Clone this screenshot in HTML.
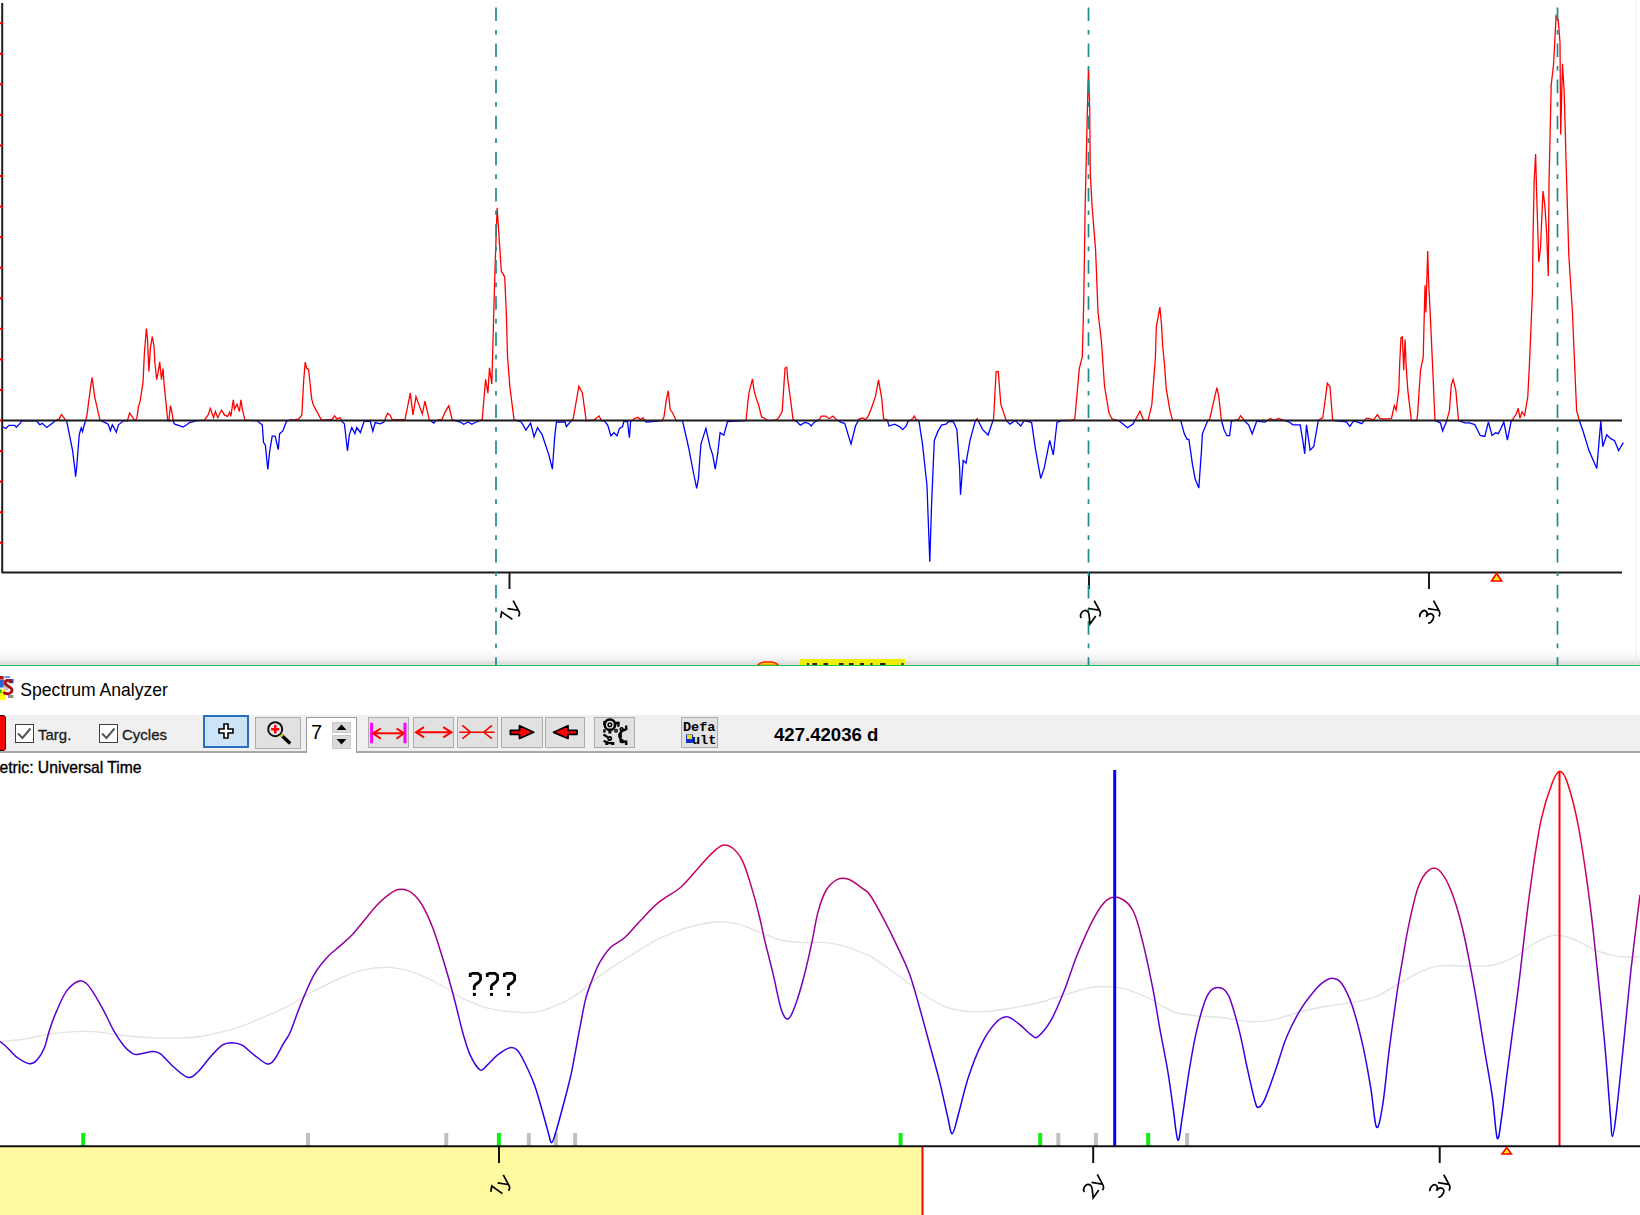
<!DOCTYPE html>
<html><head><meta charset="utf-8">
<style>
html,body{margin:0;padding:0;width:1640px;height:1215px;overflow:hidden;background:#fff;font-family:"Liberation Sans",sans-serif;}
.abs{position:absolute;}
svg{position:absolute;left:0;top:0;}
.tb{position:absolute;left:0;top:715px;width:1640px;height:36px;background:#f0f0f0;border-bottom:2px solid #a8a8a8;}
.btn{position:absolute;top:717px;height:29px;background:#e1e1e1;border:1px solid #adadad;box-sizing:border-box;height:31px;}
.lbl{position:absolute;font-size:15px;color:#000;white-space:nowrap;}
</style></head><body>
<svg width="1640" height="666" viewBox="0 0 1640 666">
  <defs>
    <linearGradient id="gshade" gradientUnits="userSpaceOnUse" x1="0" y1="649" x2="0" y2="665">
      <stop offset="0" stop-color="#ffffff"/>
      <stop offset="0.4" stop-color="#f9f9f9"/>
      <stop offset="0.68" stop-color="#f0f0f0"/>
      <stop offset="0.9" stop-color="#dcdcdc"/>
      <stop offset="0.97" stop-color="#e6dce6"/>
      <stop offset="1" stop-color="#e6dce6"/>
    </linearGradient>
    <clipPath id="cup"><rect x="0" y="0" width="1640" height="420.5"/></clipPath>
    <clipPath id="cdn"><rect x="0" y="420.5" width="1640" height="300"/></clipPath>
  </defs>
  <rect x="0" y="649" width="1640" height="16" fill="url(#gshade)"/>
  <!-- left axis -->
  <line x1="2.2" y1="3" x2="2.2" y2="573" stroke="#1e1e1e" stroke-width="2"/>
  <g stroke="#e80000" stroke-width="2">
    <line x1="0" y1="23.2" x2="3" y2="23.2"/>
<line x1="0" y1="53.8" x2="3" y2="53.8"/>
<line x1="0" y1="84.3" x2="3" y2="84.3"/>
<line x1="0" y1="114.9" x2="3" y2="114.9"/>
<line x1="0" y1="145.5" x2="3" y2="145.5"/>
<line x1="0" y1="176.0" x2="3" y2="176.0"/>
<line x1="0" y1="206.6" x2="3" y2="206.6"/>
<line x1="0" y1="237.1" x2="3" y2="237.1"/>
<line x1="0" y1="267.7" x2="3" y2="267.7"/>
<line x1="0" y1="298.3" x2="3" y2="298.3"/>
<line x1="0" y1="328.8" x2="3" y2="328.8"/>
<line x1="0" y1="359.4" x2="3" y2="359.4"/>
<line x1="0" y1="389.9" x2="3" y2="389.9"/>
<line x1="0" y1="420.5" x2="3" y2="420.5"/>
<line x1="0" y1="451.1" x2="3" y2="451.1"/>
<line x1="0" y1="481.6" x2="3" y2="481.6"/>
<line x1="0" y1="512.2" x2="3" y2="512.2"/>
<line x1="0" y1="542.7" x2="3" y2="542.7"/>
  </g>
  <!-- curve -->
  <polyline points="3.0,427.0 5.9,428.5 8.9,425.3 14.8,425.3 16.3,427.3 20.7,422.6 21.5,420.8 36.3,420.8 40.0,424.8 42.2,423.3 46.7,427.5 53.3,422.6 54.8,420.8 59.3,418.9 61.5,414.4 65.2,419.6 66.7,421.1 72.6,450.7 74.8,468.5 75.6,476.7 76.7,467.0 78.1,449.3 79.3,434.4 81.2,427.8 82.5,431.5 83.7,427.0 86.7,416.7 88.1,406.3 90.4,388.5 92.1,377.4 93.0,384.1 94.8,397.4 100.0,420.4 103.7,421.9 108.1,424.1 110.4,430.7 112.3,424.8 114.1,427.8 116.3,432.2 118.5,424.8 122.2,421.9 123.0,420.8 127.4,420.8 127.7,419.6 129.6,413.0 134.1,419.6 135.6,420.4 137.0,417.4 138.5,406.3 140.0,401.9 143.0,382.6 144.4,353.0 146.4,328.5 147.4,338.1 148.9,371.5 150.4,347.8 152.3,336.7 154.1,347.0 154.8,361.9 156.7,379.6 158.2,372.2 159.7,361.9 161.5,379.6 163.0,368.5 164.1,384.1 165.9,401.9 167.7,420.4 168.9,420.8 170.4,405.6 171.9,412.2 173.6,422.6 174.8,424.1 179.3,425.6 183.0,427.0 186.7,424.8 189.6,422.6 192.6,421.9 195.6,420.8 204.3,420.1 208.0,415.2 210.4,408.4 213.5,417.7 215.4,411.5 217.8,417.7 221.5,410.0 224.6,415.2 227.7,416.4 229.6,412.1 230.8,416.4 233.3,399.8 234.5,409.0 237.0,404.1 239.4,411.5 240.9,399.8 242.5,410.2 245.0,420.1 258.0,420.7 258.0,421.4 262.3,425.1 263.5,442.3 265.4,445.4 267.8,469.5 269.7,451.0 272.2,436.2 275.2,436.2 278.3,449.8 279.6,433.7 282.7,431.2 286.4,421.4 291.3,419.5 293.8,420.1 298.7,418.9 301.8,415.2 303.6,381.9 305.2,362.1 306.7,368.3 308.6,369.5 311.7,399.1 313.5,405.3 321.5,420.1 332.0,419.5 334.5,415.8 337.0,418.9 340.1,417.7 341.9,421.4 344.4,423.8 347.5,451.0 349.3,434.9 351.8,427.5 354.9,433.7 356.7,427.5 360.4,432.5 364.1,421.4 370.3,421.4 372.8,431.2 375.2,422.6 380.2,423.8 383.9,422.0 387.6,413.3 390.1,415.2 392.3,419.7 405.0,419.7 410.3,393.2 413.0,415.0 416.0,396.6 422.3,413.9 425.0,401.2 429.2,419.7 433.8,423.1 436.1,420.3 441.8,419.7 445.3,411.6 448.8,405.8 452.2,419.7 460.3,422.0 463.7,424.3 468.3,422.0 471.8,424.3 476.4,422.0 482.2,419.7 485.6,379.3 487.9,393.2 489.5,367.8 491.8,383.9 494.8,275.6 497.1,207.7 498.3,225.0 501.3,271.0 504.7,276.8 506.4,314.8 507.5,356.3 509.8,386.2 514.0,419.7 521.3,422.0 525.9,430.0 530.6,423.1 534.0,436.9 537.5,427.7 542.1,434.6 549.0,455.4 552.4,469.2 554.7,436.9 556.4,422.0 565.1,422.0 566.3,426.6 573.2,418.5 578.9,386.2 582.4,393.2 586.2,420.7 594.2,419.8 599.1,416.0 601.6,420.7 604.7,421.0 607.8,425.3 610.9,435.8 614.0,432.7 617.0,435.8 619.5,428.4 622.6,426.5 623.8,421.6 627.5,421.6 629.4,437.7 630.6,421.6 634.3,418.5 638.0,417.3 640.5,419.8 643.0,417.7 645.4,421.6 647.3,422.2 662.1,420.7 664.0,416.7 666.4,399.4 668.3,390.7 670.1,409.3 672.6,413.0 676.3,420.7 682.5,420.7 688.6,447.5 693.6,473.5 696.7,488.3 698.5,478.4 699.8,458.6 701.0,443.8 705.9,428.4 710.2,447.5 712.7,454.9 715.2,469.1 717.7,453.7 720.1,432.7 723.8,435.2 727.5,421.6 746.0,420.7 747.9,401.9 749.1,392.0 752.5,379.0 754.1,390.7 756.5,399.4 758.4,404.3 761.5,416.7 768.9,420.7 776.3,419.8 778.6,417.9 782.2,411.5 785.0,368.1 786.8,367.2 787.7,379.0 789.5,391.6 793.1,419.7 796.7,421.5 800.3,425.1 804.9,422.4 808.5,423.3 811.2,426.0 813.9,422.4 819.3,419.7 821.2,416.1 825.7,416.1 829.3,418.8 832.9,416.1 836.5,419.7 841.1,422.4 844.7,423.3 851.0,444.1 855.5,426.0 859.2,418.8 862.8,417.9 865.5,419.7 868.2,416.1 870.9,409.7 875.5,396.2 878.5,379.9 881.8,398.9 883.6,418.8 887.2,419.7 889.0,426.0 894.5,424.2 899.9,426.9 902.6,429.6 906.2,426.0 908.0,421.5 912.6,418.8 914.4,416.1 916.2,419.7 918.9,420.6 922.5,444.1 927.0,485.7 927.9,511.1 929.8,561.8 931.6,503.8 934.3,440.5 937.9,431.4 941.5,425.1 946.0,424.2 948.8,421.5 953.3,421.5 956.9,429.6 959.6,467.6 960.5,494.8 963.2,460.4 966.0,463.1 970.0,440.4 975.4,420.5 977.2,418.7 982.7,429.6 988.1,435.0 993.6,418.7 996.1,371.6 998.3,371.6 1000.8,404.2 1006.2,420.5 1009.9,424.1 1015.3,420.5 1020.7,425.9 1024.3,420.5 1031.6,422.3 1035.2,447.7 1040.7,478.5 1044.3,467.6 1049.7,440.4 1053.3,454.9 1057.0,422.3 1062.4,420.5 1070.0,420.5 1074.8,419.0 1079.3,368.6 1082.3,356.7 1083.7,303.0 1085.2,205.0 1087.3,113.4 1088.5,67.4 1089.7,110.0 1090.3,172.8 1092.0,205.0 1095.6,250.0 1098.0,312.0 1101.5,342.0 1104.5,386.0 1109.0,413.0 1112.0,419.0 1118.6,420.5 1127.6,427.8 1133.0,424.1 1140.0,411.2 1143.6,420.3 1148.1,420.3 1151.8,404.9 1155.4,357.8 1156.3,327.1 1159.9,307.1 1161.7,327.1 1162.6,345.2 1164.4,363.3 1166.2,388.6 1169.9,410.3 1172.6,420.3 1180.7,420.3 1184.3,433.8 1187.1,439.3 1188.9,439.3 1192.5,464.6 1195.2,479.1 1198.8,488.1 1201.5,450.1 1202.4,433.8 1207.9,420.3 1209.7,419.4 1213.3,403.1 1216.9,387.7 1218.7,395.8 1221.4,420.3 1224.2,430.2 1226.9,435.7 1229.6,435.7 1231.4,421.2 1238.6,419.4 1240.5,415.7 1245.0,421.2 1248.6,424.8 1252.2,433.8 1256.7,421.2 1264.9,422.1 1270.3,418.5 1273.9,420.3 1278.5,418.5 1289.3,422.1 1292.9,424.8 1300.2,424.8 1302.9,441.1 1304.7,453.8 1306.5,424.8 1310.1,450.1 1313.8,446.5 1318.3,420.3 1322.8,417.6 1325.5,397.6 1327.3,383.2 1330.0,386.8 1332.7,420.5 1346.3,421.9 1349.9,426.4 1353.5,421.0 1357.1,421.9 1361.7,423.7 1366.2,418.3 1368.9,418.3 1373.4,420.1 1377.4,414.7 1379.8,418.3 1384.3,419.2 1391.5,418.3 1394.3,405.6 1396.1,410.1 1398.8,390.2 1399.7,363.1 1401.0,337.7 1402.4,336.8 1403.7,370.3 1405.1,339.5 1406.0,363.1 1407.8,390.2 1411.4,420.5 1416.9,420.5 1417.8,411.9 1418.7,397.5 1420.5,370.3 1423.2,357.6 1424.1,321.4 1425.0,285.2 1425.9,312.4 1427.7,250.9 1428.6,281.6 1430.5,319.6 1432.3,359.5 1435.0,420.5 1440.4,422.8 1442.6,431.0 1446.7,421.0 1449.5,410.1 1451.3,384.8 1453.1,379.4 1455.8,390.2 1458.5,420.5 1464.8,422.8 1469.4,422.8 1474.8,424.6 1480.2,435.5 1484.8,436.4 1488.4,421.9 1492.0,435.5 1495.6,432.8 1498.3,433.7 1501.0,428.2 1503.8,421.9 1507.4,440.0 1511.0,421.9 1516.4,413.8 1518.2,408.3 1520.0,418.3 1521.9,411.9 1524.6,415.6 1527.8,396.5 1529.6,361.0 1532.4,293.8 1533.1,233.6 1534.2,180.5 1535.6,154.0 1537.0,205.0 1538.8,262.0 1540.5,247.8 1543.0,191.0 1544.8,205.0 1546.5,230.0 1548.3,276.0 1549.0,184.0 1551.2,85.0 1553.6,63.7 1556.1,16.0 1558.2,19.5 1560.0,42.5 1560.7,134.5 1562.5,63.7 1564.2,92.0 1566.0,159.3 1568.8,255.0 1572.4,311.5 1574.2,354.0 1576.6,410.6 1579.5,421.0 1583.0,431.0 1589.0,450.6 1596.8,468.4 1600.8,421.0 1602.8,446.6 1606.7,434.8 1610.7,438.7 1614.6,440.7 1618.6,450.6 1623.3,442.7" fill="none" stroke="#ff0000" stroke-width="1.3" clip-path="url(#cup)"/>
  <polyline points="3.0,427.0 5.9,428.5 8.9,425.3 14.8,425.3 16.3,427.3 20.7,422.6 21.5,420.8 36.3,420.8 40.0,424.8 42.2,423.3 46.7,427.5 53.3,422.6 54.8,420.8 59.3,418.9 61.5,414.4 65.2,419.6 66.7,421.1 72.6,450.7 74.8,468.5 75.6,476.7 76.7,467.0 78.1,449.3 79.3,434.4 81.2,427.8 82.5,431.5 83.7,427.0 86.7,416.7 88.1,406.3 90.4,388.5 92.1,377.4 93.0,384.1 94.8,397.4 100.0,420.4 103.7,421.9 108.1,424.1 110.4,430.7 112.3,424.8 114.1,427.8 116.3,432.2 118.5,424.8 122.2,421.9 123.0,420.8 127.4,420.8 127.7,419.6 129.6,413.0 134.1,419.6 135.6,420.4 137.0,417.4 138.5,406.3 140.0,401.9 143.0,382.6 144.4,353.0 146.4,328.5 147.4,338.1 148.9,371.5 150.4,347.8 152.3,336.7 154.1,347.0 154.8,361.9 156.7,379.6 158.2,372.2 159.7,361.9 161.5,379.6 163.0,368.5 164.1,384.1 165.9,401.9 167.7,420.4 168.9,420.8 170.4,405.6 171.9,412.2 173.6,422.6 174.8,424.1 179.3,425.6 183.0,427.0 186.7,424.8 189.6,422.6 192.6,421.9 195.6,420.8 204.3,420.1 208.0,415.2 210.4,408.4 213.5,417.7 215.4,411.5 217.8,417.7 221.5,410.0 224.6,415.2 227.7,416.4 229.6,412.1 230.8,416.4 233.3,399.8 234.5,409.0 237.0,404.1 239.4,411.5 240.9,399.8 242.5,410.2 245.0,420.1 258.0,420.7 258.0,421.4 262.3,425.1 263.5,442.3 265.4,445.4 267.8,469.5 269.7,451.0 272.2,436.2 275.2,436.2 278.3,449.8 279.6,433.7 282.7,431.2 286.4,421.4 291.3,419.5 293.8,420.1 298.7,418.9 301.8,415.2 303.6,381.9 305.2,362.1 306.7,368.3 308.6,369.5 311.7,399.1 313.5,405.3 321.5,420.1 332.0,419.5 334.5,415.8 337.0,418.9 340.1,417.7 341.9,421.4 344.4,423.8 347.5,451.0 349.3,434.9 351.8,427.5 354.9,433.7 356.7,427.5 360.4,432.5 364.1,421.4 370.3,421.4 372.8,431.2 375.2,422.6 380.2,423.8 383.9,422.0 387.6,413.3 390.1,415.2 392.3,419.7 405.0,419.7 410.3,393.2 413.0,415.0 416.0,396.6 422.3,413.9 425.0,401.2 429.2,419.7 433.8,423.1 436.1,420.3 441.8,419.7 445.3,411.6 448.8,405.8 452.2,419.7 460.3,422.0 463.7,424.3 468.3,422.0 471.8,424.3 476.4,422.0 482.2,419.7 485.6,379.3 487.9,393.2 489.5,367.8 491.8,383.9 494.8,275.6 497.1,207.7 498.3,225.0 501.3,271.0 504.7,276.8 506.4,314.8 507.5,356.3 509.8,386.2 514.0,419.7 521.3,422.0 525.9,430.0 530.6,423.1 534.0,436.9 537.5,427.7 542.1,434.6 549.0,455.4 552.4,469.2 554.7,436.9 556.4,422.0 565.1,422.0 566.3,426.6 573.2,418.5 578.9,386.2 582.4,393.2 586.2,420.7 594.2,419.8 599.1,416.0 601.6,420.7 604.7,421.0 607.8,425.3 610.9,435.8 614.0,432.7 617.0,435.8 619.5,428.4 622.6,426.5 623.8,421.6 627.5,421.6 629.4,437.7 630.6,421.6 634.3,418.5 638.0,417.3 640.5,419.8 643.0,417.7 645.4,421.6 647.3,422.2 662.1,420.7 664.0,416.7 666.4,399.4 668.3,390.7 670.1,409.3 672.6,413.0 676.3,420.7 682.5,420.7 688.6,447.5 693.6,473.5 696.7,488.3 698.5,478.4 699.8,458.6 701.0,443.8 705.9,428.4 710.2,447.5 712.7,454.9 715.2,469.1 717.7,453.7 720.1,432.7 723.8,435.2 727.5,421.6 746.0,420.7 747.9,401.9 749.1,392.0 752.5,379.0 754.1,390.7 756.5,399.4 758.4,404.3 761.5,416.7 768.9,420.7 776.3,419.8 778.6,417.9 782.2,411.5 785.0,368.1 786.8,367.2 787.7,379.0 789.5,391.6 793.1,419.7 796.7,421.5 800.3,425.1 804.9,422.4 808.5,423.3 811.2,426.0 813.9,422.4 819.3,419.7 821.2,416.1 825.7,416.1 829.3,418.8 832.9,416.1 836.5,419.7 841.1,422.4 844.7,423.3 851.0,444.1 855.5,426.0 859.2,418.8 862.8,417.9 865.5,419.7 868.2,416.1 870.9,409.7 875.5,396.2 878.5,379.9 881.8,398.9 883.6,418.8 887.2,419.7 889.0,426.0 894.5,424.2 899.9,426.9 902.6,429.6 906.2,426.0 908.0,421.5 912.6,418.8 914.4,416.1 916.2,419.7 918.9,420.6 922.5,444.1 927.0,485.7 927.9,511.1 929.8,561.8 931.6,503.8 934.3,440.5 937.9,431.4 941.5,425.1 946.0,424.2 948.8,421.5 953.3,421.5 956.9,429.6 959.6,467.6 960.5,494.8 963.2,460.4 966.0,463.1 970.0,440.4 975.4,420.5 977.2,418.7 982.7,429.6 988.1,435.0 993.6,418.7 996.1,371.6 998.3,371.6 1000.8,404.2 1006.2,420.5 1009.9,424.1 1015.3,420.5 1020.7,425.9 1024.3,420.5 1031.6,422.3 1035.2,447.7 1040.7,478.5 1044.3,467.6 1049.7,440.4 1053.3,454.9 1057.0,422.3 1062.4,420.5 1070.0,420.5 1074.8,419.0 1079.3,368.6 1082.3,356.7 1083.7,303.0 1085.2,205.0 1087.3,113.4 1088.5,67.4 1089.7,110.0 1090.3,172.8 1092.0,205.0 1095.6,250.0 1098.0,312.0 1101.5,342.0 1104.5,386.0 1109.0,413.0 1112.0,419.0 1118.6,420.5 1127.6,427.8 1133.0,424.1 1140.0,411.2 1143.6,420.3 1148.1,420.3 1151.8,404.9 1155.4,357.8 1156.3,327.1 1159.9,307.1 1161.7,327.1 1162.6,345.2 1164.4,363.3 1166.2,388.6 1169.9,410.3 1172.6,420.3 1180.7,420.3 1184.3,433.8 1187.1,439.3 1188.9,439.3 1192.5,464.6 1195.2,479.1 1198.8,488.1 1201.5,450.1 1202.4,433.8 1207.9,420.3 1209.7,419.4 1213.3,403.1 1216.9,387.7 1218.7,395.8 1221.4,420.3 1224.2,430.2 1226.9,435.7 1229.6,435.7 1231.4,421.2 1238.6,419.4 1240.5,415.7 1245.0,421.2 1248.6,424.8 1252.2,433.8 1256.7,421.2 1264.9,422.1 1270.3,418.5 1273.9,420.3 1278.5,418.5 1289.3,422.1 1292.9,424.8 1300.2,424.8 1302.9,441.1 1304.7,453.8 1306.5,424.8 1310.1,450.1 1313.8,446.5 1318.3,420.3 1322.8,417.6 1325.5,397.6 1327.3,383.2 1330.0,386.8 1332.7,420.5 1346.3,421.9 1349.9,426.4 1353.5,421.0 1357.1,421.9 1361.7,423.7 1366.2,418.3 1368.9,418.3 1373.4,420.1 1377.4,414.7 1379.8,418.3 1384.3,419.2 1391.5,418.3 1394.3,405.6 1396.1,410.1 1398.8,390.2 1399.7,363.1 1401.0,337.7 1402.4,336.8 1403.7,370.3 1405.1,339.5 1406.0,363.1 1407.8,390.2 1411.4,420.5 1416.9,420.5 1417.8,411.9 1418.7,397.5 1420.5,370.3 1423.2,357.6 1424.1,321.4 1425.0,285.2 1425.9,312.4 1427.7,250.9 1428.6,281.6 1430.5,319.6 1432.3,359.5 1435.0,420.5 1440.4,422.8 1442.6,431.0 1446.7,421.0 1449.5,410.1 1451.3,384.8 1453.1,379.4 1455.8,390.2 1458.5,420.5 1464.8,422.8 1469.4,422.8 1474.8,424.6 1480.2,435.5 1484.8,436.4 1488.4,421.9 1492.0,435.5 1495.6,432.8 1498.3,433.7 1501.0,428.2 1503.8,421.9 1507.4,440.0 1511.0,421.9 1516.4,413.8 1518.2,408.3 1520.0,418.3 1521.9,411.9 1524.6,415.6 1527.8,396.5 1529.6,361.0 1532.4,293.8 1533.1,233.6 1534.2,180.5 1535.6,154.0 1537.0,205.0 1538.8,262.0 1540.5,247.8 1543.0,191.0 1544.8,205.0 1546.5,230.0 1548.3,276.0 1549.0,184.0 1551.2,85.0 1553.6,63.7 1556.1,16.0 1558.2,19.5 1560.0,42.5 1560.7,134.5 1562.5,63.7 1564.2,92.0 1566.0,159.3 1568.8,255.0 1572.4,311.5 1574.2,354.0 1576.6,410.6 1579.5,421.0 1583.0,431.0 1589.0,450.6 1596.8,468.4 1600.8,421.0 1602.8,446.6 1606.7,434.8 1610.7,438.7 1614.6,440.7 1618.6,450.6 1623.3,442.7" fill="none" stroke="#0000ff" stroke-width="1.3" clip-path="url(#cdn)"/>
  <line x1="2" y1="420.5" x2="1622" y2="420.5" stroke="#1a1a1a" stroke-width="2"/>
  <line x1="2" y1="572.5" x2="1622" y2="572.5" stroke="#1a1a1a" stroke-width="2"/>
  <g stroke="#1a1a1a" stroke-width="2">
    <line x1="509.5" y1="572" x2="509.5" y2="589"/>
    <line x1="1089" y1="572" x2="1089" y2="589"/>
    <line x1="1429" y1="572" x2="1429" y2="589"/>
  </g>
  <g stroke="#1f8c8c" stroke-width="1.7" stroke-dasharray="13.6 8.9 4.7 8.9" stroke-dashoffset="28.7">
    <line x1="496" y1="0" x2="496" y2="665"/>
    <line x1="1088.5" y1="0" x2="1088.5" y2="665"/>
    <line x1="1557.5" y1="0" x2="1557.5" y2="665"/>
  </g>
  <polygon points="1491.5,581 1496.6,573.5 1501.7,581" fill="#ffee00" stroke="#ff0000" stroke-width="1.6"/>
<g transform="translate(509.6 610.1) rotate(-55)" fill="none" stroke="#000" stroke-width="1.7"><path d="M-6,7.6 V-5.5 L-11.4,-2.9 M0,-2.6 L4.7,7.0 M9.8,-2.5 L4.2,8.6 Q2.8,11 -0.2,10.9"/></g><g transform="translate(1090.6 610.0) rotate(-55)" fill="none" stroke="#000" stroke-width="1.7"><path d="M-11.8,-3 C-11.2,-6.2 -5.5,-6.8 -3.8,-4.6 C-2.2,-2.4 -3.2,0 -5.2,1.8 L-11.8,7.6 H-2 M0,-2.6 L4.7,7.0 M9.8,-2.5 L4.2,8.6 Q2.8,11 -0.2,10.9"/></g><g transform="translate(1430.0 610.1) rotate(-55)" fill="none" stroke="#000" stroke-width="1.7"><path d="M-11.5,-4.2 C-10.2,-6.6 -3.2,-6.6 -3.2,-3.0 C-3.2,-0.6 -5.4,0.6 -7.6,0.6 C-4.6,0.6 -2.2,2.0 -2.2,4.5 C-2.2,8.2 -9.6,9.0 -11.8,6.0 M0,-2.6 L4.7,7.0 M9.8,-2.5 L4.2,8.6 Q2.8,11 -0.2,10.9"/></g>
  <rect x="800" y="659" width="105" height="6" fill="#eeee00"/>
  <g fill="#222"><rect x="807" y="663" width="2" height="2"/><rect x="812.5" y="663" width="4.5" height="2"/><rect x="823.5" y="663" width="4.5" height="2"/><rect x="839" y="663" width="4.5" height="2"/><rect x="849" y="663" width="4.5" height="2"/><rect x="860" y="663" width="4" height="2"/><rect x="870.5" y="663" width="2" height="2"/><rect x="880" y="663" width="5.5" height="2"/><rect x="901.5" y="663" width="2" height="2"/></g>
  <path d="M757,665.5 Q760,662.5 764,662 L772,662 Q776,662.5 779,665.5 Z" fill="#f0d000" stroke="#ff2000" stroke-width="1.4"/>
  <line x1="0" y1="665.5" x2="1640" y2="665.5" stroke="#20c050" stroke-width="1.2"/>
  <line x1="1636" y1="0" x2="1636" y2="665" stroke="#eeeeee" stroke-width="1"/>
</svg>

<!-- title bar -->
<svg width="16" height="26" viewBox="0 0 16 26" style="left:0;top:676px;">
  <rect x="0" y="0" width="14" height="24" fill="#ffffff"/>
  <rect x="0" y="0" width="3.7" height="3.6" fill="#b01818"/>
  <rect x="4.5" y="0" width="5.5" height="2.2" fill="#8090e0"/>
  <rect x="9" y="3" width="4.5" height="4.2" fill="#2848e8"/>
  <rect x="0" y="4" width="4" height="7.5" fill="#2a62d8"/>
  <rect x="3.5" y="5" width="5" height="9" fill="#c8c8c8"/>
  <rect x="0" y="13.5" width="5" height="10.5" fill="#ffff10"/>
  <rect x="0" y="13.5" width="1.6" height="3.5" fill="#18c018"/>
  <rect x="8" y="19" width="5.5" height="3" fill="#909090"/>
  <path d="M12,6.5 C10,3.6 5,3.6 5,7 C5,10 12,10.5 12,14 C12,18 6,19 3.5,16" fill="none" stroke="#a81010" stroke-width="2.8"/>
</svg>
<div class="abs" style="left:20.3px;top:680.3px;font-size:17.6px;color:#000;white-space:nowrap;">Spectrum Analyzer</div>

<!-- toolbar -->
<div class="tb"></div>
<div class="abs" style="left:-3px;top:715.3px;width:8.5px;height:35.7px;background:#ff0000;border:1.5px solid #200;border-radius:3px;box-sizing:border-box;"></div>
<div class="abs" style="left:15px;top:724px;width:19px;height:19px;border:1.7px solid #404040;box-sizing:border-box;background:#fff;"></div>
<svg width="19" height="19" style="left:15px;top:724px;"><path d="M3,9.5 L7.5,14 L15.5,4.5" fill="none" stroke="#555" stroke-width="2"/></svg>
<div class="abs" style="left:38px;top:726.3px;font-size:15px;color:#1a1a1a;white-space:nowrap;-webkit-text-stroke:0.3px #1a1a1a;">Targ.</div>
<div class="abs" style="left:99px;top:724px;width:19px;height:19px;border:1.7px solid #404040;box-sizing:border-box;background:#fff;"></div>
<svg width="19" height="19" style="left:99px;top:724px;"><path d="M3,9.5 L7.5,14 L15.5,4.5" fill="none" stroke="#555" stroke-width="2"/></svg>
<div class="abs" style="left:122px;top:726.3px;font-size:15px;color:#1a1a1a;white-space:nowrap;-webkit-text-stroke:0.3px #1a1a1a;">Cycles</div>
<div class="abs" style="left:203.0px;top:715.4px;width:45.5px;height:32.3px;background:#cce4f7;border:1px solid #2a6fbf;box-sizing:border-box;border-width:2px;"></div>
<svg width="20" height="20" style="left:216px;top:721px;"><path d="M8,3 H12 V8 H17 V12 H12 V17 H8 V12 H3 V8 H8 Z" fill="#fff" stroke="#000" stroke-width="1.6"/></svg>
<div class="abs" style="left:255.4px;top:716.8px;width:46.0px;height:32.0px;background:#e1e1e1;border:1px solid #adadad;box-sizing:border-box;"></div>
<svg width="40" height="30" style="left:258px;top:718px;"><line x1="23.5" y1="17.2" x2="32.2" y2="25.5" stroke="#000" stroke-width="3.4"/><line x1="22.2" y1="16" x2="24.6" y2="18.3" stroke="#d8e000" stroke-width="3"/><circle cx="17.2" cy="11.2" r="7" fill="#e8e8e8" stroke="#111" stroke-width="2"/><path d="M17.2,7 V15.4 M13.2,11.2 H21.2" stroke="#ff0000" stroke-width="2.4"/></svg>
<div class="abs" style="left:306px;top:716.5px;width:51px;height:36px;background:#fff;border:1px solid #9a9a9a;border-bottom:none;box-sizing:border-box;"></div>
<div class="abs" style="left:311px;top:721px;font-size:20px;color:#000;">7</div>
<div class="abs" style="left:332.0px;top:721.5px;width:19.0px;height:11.0px;background:#dadada;border:1px solid #c8c8c8;box-sizing:border-box;"></div>
<div class="abs" style="left:332.0px;top:735.0px;width:19.0px;height:14.0px;background:#dadada;border:1px solid #c8c8c8;box-sizing:border-box;"></div>
<svg width="19" height="30" style="left:332px;top:721px;"><path d="M4.5,9 L9.5,3.5 L14.5,9 Z M4.5,18 L9.5,23.5 L14.5,18 Z" fill="#000"/></svg>
<div class="abs" style="left:367.8px;top:717.0px;width:41.2px;height:30.6px;background:#e1e1e1;border:1px solid #adadad;box-sizing:border-box;"></div>
<div class="abs" style="left:413.0px;top:717.0px;width:41.0px;height:30.6px;background:#e1e1e1;border:1px solid #adadad;box-sizing:border-box;"></div>
<div class="abs" style="left:456.6px;top:717.0px;width:41.0px;height:30.6px;background:#e1e1e1;border:1px solid #adadad;box-sizing:border-box;"></div>
<div class="abs" style="left:501.0px;top:717.0px;width:41.7px;height:30.6px;background:#e1e1e1;border:1px solid #adadad;box-sizing:border-box;"></div>
<div class="abs" style="left:545.0px;top:717.0px;width:39.6px;height:30.6px;background:#e1e1e1;border:1px solid #adadad;box-sizing:border-box;"></div>
<div class="abs" style="left:594.0px;top:717.0px;width:41.0px;height:30.6px;background:#e1e1e1;border:1px solid #adadad;box-sizing:border-box;"></div>
<div class="abs" style="left:681.0px;top:717.0px;width:37.0px;height:30.6px;background:#e1e1e1;border:1px solid #adadad;box-sizing:border-box;"></div>
<svg width="1640" height="40" style="left:0;top:710px;">
<g stroke="#ff00ff" stroke-width="3"><line x1="371.6" y1="12.7" x2="371.6" y2="33.3"/><line x1="405" y1="12.7" x2="405" y2="33.3"/></g>
<g stroke="#ff0000" stroke-width="2" fill="none">
<line x1="373" y1="23.3" x2="404" y2="23.3"/><path d="M380.8,18.5 L373,23.3 L380.8,28.7 M396.5,18.5 L404,23.3 L396.5,28.7"/>
<line x1="416" y1="22.3" x2="451.4" y2="22.3"/><path d="M424,17.1 L416,22.3 L424,27.4 M443.2,17.1 L451.4,22.3 L443.2,27.4"/>
<line x1="459.4" y1="22.3" x2="494.6" y2="22.3" stroke-width="1.6"/><path d="M462.4,15.4 L470.6,22.3 L462.4,28.7 M491.9,15.4 L483.7,22.3 L491.9,28.7" stroke-width="1.6"/>
</g>
<path d="M510.4,20.3 H519.5 V15.7 L533.7,22.3 L519.5,28.5 V24.3 H510.4 Z" fill="#ff0000" stroke="#000" stroke-width="1.8" stroke-linejoin="round"/>
<path d="M577,20.3 H568 V15.7 L553.6,22.3 L568,28.5 V24.3 H577 Z" fill="#ff0000" stroke="#000" stroke-width="1.8" stroke-linejoin="round"/>
<g fill="#000">
<rect x="603.2" y="11" width="2.2" height="4"/><rect x="615.5" y="11.8" width="4" height="2.6"/><rect x="617.2" y="11.8" width="2.3" height="5"/>
<rect x="608.4" y="19.5" width="3" height="4"/><rect x="603.2" y="19.3" width="2.4" height="3.2"/>
<rect x="605.3" y="32" width="3" height="3"/><rect x="611.3" y="32" width="3" height="3"/>
<rect x="625" y="15.5" width="2.4" height="4.5"/><rect x="618.3" y="23.2" width="3.5" height="4.5"/><rect x="625" y="30.5" width="2.4" height="4.5"/>
</g>
<g fill="none" stroke="#000">
<circle cx="609.9" cy="14.7" r="5.2" stroke-width="2.6"/>
<circle cx="609.9" cy="14.7" r="1.8" stroke-width="1.5"/>
<circle cx="616" cy="20.7" r="1.3" stroke-width="1.4"/>
<circle cx="609.7" cy="28.4" r="1.6" stroke-width="1.8"/>
<path d="M603.5,24.5 L607.8,27.2 M603.5,31 L608.5,32.5 M608.5,32.8 L613.5,33.5" stroke-width="2.2"/>
<path d="M626,19.5 L622.5,20.5 Q619.5,23 620,26 Q620,30 622.5,32 L626,31.5" stroke-width="2.4"/>
<circle cx="621.6" cy="19.1" r="1.4" stroke-width="1.6"/><circle cx="621.6" cy="31" r="1.4" stroke-width="1.6"/>
</g>
<text x="683" y="21" font-family="Liberation Mono" font-size="13.5" font-weight="bold" fill="#000">Defa</text>
<text x="692" y="34" font-family="Liberation Mono" font-size="13.5" font-weight="bold" fill="#000">ult</text>
<rect x="686" y="24.5" width="7" height="8.5" fill="#1030c0"/><rect x="687" y="25" width="5" height="4" fill="#e8e000"/>
<text x="774" y="31" font-family="Liberation Sans" font-size="18.6" font-weight="bold" fill="#000">427.42036 d</text>
</svg>

<div class="abs" style="left:-0.5px;top:758.5px;font-size:15.7px;-webkit-text-stroke:0.35px #000;white-space:nowrap;color:#000;">etric: Universal Time</div>

<!-- bottom chart -->
<svg width="1640" height="1215" viewBox="0 0 1640 1215" style="top:0;">
  <defs>
    <linearGradient id="gcurve" gradientUnits="userSpaceOnUse" x1="0" y1="771" x2="0" y2="1146">
      <stop offset="0" stop-color="#ff0000"/>
      <stop offset="0.2" stop-color="#dc0050"/>
      <stop offset="0.6" stop-color="#6a00c8"/>
      <stop offset="1" stop-color="#0000ff"/>
    </linearGradient>
  </defs>
  <rect x="0" y="1147" width="922" height="68" fill="#fff9a0"/>
  <line x1="922.5" y1="1146" x2="922.5" y2="1215" stroke="#ff0000" stroke-width="2"/>
  <path d="M0.0,1041.5 C4.1,1041.1 16.5,1040.2 24.7,1039.0 C32.9,1037.8 41.2,1035.3 49.4,1034.1 C57.6,1032.8 66.7,1032.0 74.1,1031.6 C81.5,1031.2 87.2,1031.2 93.8,1031.6 C100.4,1032.0 107.0,1033.3 113.6,1034.1 C120.2,1034.9 126.7,1035.9 133.3,1036.5 C139.9,1037.2 144.0,1037.6 153.1,1037.8 C162.1,1038.0 177.8,1038.4 187.7,1037.8 C197.5,1037.2 204.1,1035.7 212.3,1034.1 C220.6,1032.4 228.8,1030.6 237.0,1027.9 C245.3,1025.2 253.5,1021.5 261.7,1018.0 C270.0,1014.5 278.4,1011.0 286.4,1006.9 C294.4,1002.8 300.9,998.1 309.8,993.3 C318.6,988.6 330.3,982.4 339.4,978.5 C348.4,974.6 355.8,971.7 364.1,969.9 C372.3,968.0 380.5,967.0 388.8,967.4 C397.0,967.8 405.2,969.7 413.5,972.3 C421.7,975.0 429.9,979.1 438.1,983.5 C446.4,987.8 454.6,994.2 462.8,998.3 C471.1,1002.4 479.3,1005.9 487.5,1008.1 C495.8,1010.4 504.0,1011.2 512.2,1011.9 C520.5,1012.5 528.7,1013.3 536.9,1011.9 C545.1,1010.4 554.4,1006.5 561.6,1003.2 C568.8,999.9 573.2,997.0 580.0,992.1 C586.8,987.2 594.0,980.0 602.4,973.9 C610.8,967.9 621.0,961.6 630.4,955.7 C639.7,949.9 649.0,943.6 658.4,938.9 C667.7,934.3 677.0,930.6 686.4,927.8 C695.7,925.0 705.9,922.9 714.3,922.2 C722.7,921.5 729.3,921.9 736.7,923.6 C744.2,925.2 751.7,929.2 759.1,932.0 C766.6,934.7 774.0,938.6 781.5,940.3 C789.0,942.1 796.4,942.2 803.9,942.6 C811.4,943.0 818.8,941.8 826.3,942.6 C833.8,943.4 842.2,945.4 848.7,947.3 C855.2,949.3 861.9,952.9 865.5,954.3 C869.0,955.8 864.9,952.6 870.0,955.9 C875.1,959.2 887.6,967.7 896.3,974.0 C905.1,980.3 914.5,988.3 922.7,993.8 C930.9,999.3 937.0,1003.9 945.7,1007.0 C954.5,1010.0 964.9,1011.6 975.4,1011.9 C985.8,1012.2 997.3,1010.2 1008.3,1008.6 C1019.3,1007.0 1031.3,1004.5 1041.2,1002.0 C1051.1,999.5 1058.8,996.3 1067.6,993.8 C1076.3,991.3 1085.1,988.2 1093.9,987.2 C1102.7,986.2 1111.5,986.2 1120.2,987.9 C1129.0,989.5 1140.0,994.3 1146.6,997.1 C1153.2,999.9 1155.1,1002.0 1160.0,1004.6 C1164.9,1007.2 1169.7,1010.6 1175.8,1012.5 C1181.9,1014.4 1189.0,1015.1 1196.9,1015.9 C1204.8,1016.8 1214.0,1016.8 1223.2,1017.8 C1232.4,1018.7 1243.4,1021.5 1252.2,1021.7 C1261.0,1021.9 1267.5,1020.8 1275.9,1019.1 C1284.2,1017.3 1293.4,1013.4 1302.2,1011.2 C1311.0,1009.0 1319.8,1007.5 1328.6,1005.9 C1337.3,1004.4 1347.0,1003.5 1354.9,1002.0 C1362.8,1000.4 1368.9,999.6 1376.0,996.7 C1383.0,993.8 1390.0,988.8 1397.0,984.9 C1404.1,980.9 1411.1,976.2 1418.1,973.0 C1425.1,969.8 1430.5,967.1 1439.2,965.9 C1447.8,964.7 1461.1,966.1 1470.0,966.0 C1478.8,965.9 1484.9,966.8 1492.4,965.2 C1499.9,963.7 1507.4,960.6 1514.9,956.6 C1522.4,952.7 1530.5,945.2 1537.4,941.6 C1544.2,938.1 1549.9,935.6 1556.1,935.3 C1562.3,935.0 1568.0,937.2 1574.8,939.8 C1581.7,942.4 1589.8,948.2 1597.3,951.0 C1604.8,953.8 1612.7,955.7 1619.8,956.6 C1626.9,957.6 1636.6,956.6 1640.0,956.6" fill="none" stroke="#e4e4e4" stroke-width="1.4"/>
  <g stroke-width="4">
    <line x1="83.2" y1="1133" x2="83.2" y2="1146" stroke="#10f010"/>
<line x1="498.9" y1="1133" x2="498.9" y2="1146" stroke="#10f010"/>
<line x1="900.6" y1="1133" x2="900.6" y2="1146" stroke="#10f010"/>
<line x1="1040.2" y1="1133" x2="1040.2" y2="1146" stroke="#10f010"/>
<line x1="1148.2" y1="1133" x2="1148.2" y2="1146" stroke="#10f010"/>
<line x1="308.0" y1="1133" x2="308.0" y2="1146" stroke="#c0c0c0"/>
<line x1="446.3" y1="1133" x2="446.3" y2="1146" stroke="#c0c0c0"/>
<line x1="528.8" y1="1133" x2="528.8" y2="1146" stroke="#c0c0c0"/>
<line x1="555.9" y1="1133" x2="555.9" y2="1146" stroke="#c0c0c0"/>
<line x1="575.1" y1="1133" x2="575.1" y2="1146" stroke="#c0c0c0"/>
<line x1="1058.3" y1="1133" x2="1058.3" y2="1146" stroke="#c0c0c0"/>
<line x1="1095.9" y1="1133" x2="1095.9" y2="1146" stroke="#c0c0c0"/>
<line x1="1187.1" y1="1133" x2="1187.1" y2="1146" stroke="#c0c0c0"/>
  </g>
  <path d="M0.0,1041.5 C1.2,1042.5 4.5,1045.0 7.4,1047.7 C10.3,1050.3 13.6,1054.9 17.3,1057.5 C21.0,1060.2 26.3,1063.3 29.6,1063.7 C32.9,1064.1 34.6,1062.7 37.0,1060.0 C39.5,1057.3 42.4,1052.6 44.4,1047.7 C46.5,1042.7 47.3,1036.5 49.4,1030.4 C51.4,1024.2 53.9,1017.2 56.8,1010.6 C59.7,1004.0 63.0,995.8 66.7,990.9 C70.4,985.9 75.7,982.2 79.0,981.0 C82.3,979.8 84.0,981.4 86.4,983.5 C88.9,985.5 90.9,988.8 93.8,993.3 C96.7,997.9 100.4,1004.4 103.7,1010.6 C107.0,1016.8 110.3,1024.6 113.6,1030.4 C116.9,1036.1 120.2,1041.3 123.5,1045.2 C126.7,1049.1 130.5,1052.4 133.3,1053.8 C136.2,1055.3 137.4,1054.2 140.7,1053.8 C144.0,1053.4 149.8,1051.4 153.1,1051.4 C156.4,1051.4 157.2,1051.4 160.5,1053.8 C163.8,1056.3 168.3,1062.3 172.8,1066.2 C177.4,1070.1 183.5,1076.3 187.7,1077.3 C191.8,1078.3 193.8,1075.6 197.5,1072.3 C201.2,1069.1 205.8,1062.1 209.9,1057.5 C214.0,1053.0 218.5,1047.7 222.2,1045.2 C225.9,1042.7 228.8,1042.7 232.1,1042.7 C235.4,1042.7 238.3,1043.1 242.0,1045.2 C245.7,1047.2 250.2,1052.0 254.3,1055.1 C258.4,1058.1 263.4,1062.9 266.7,1063.7 C270.0,1064.5 271.2,1063.5 274.1,1060.0 C277.0,1056.5 281.3,1047.2 284.0,1042.7 C286.6,1038.2 287.8,1037.8 290.0,1032.8 C292.2,1027.9 294.9,1019.5 297.4,1013.1 C299.9,1006.7 301.9,1001.2 304.8,994.6 C307.7,988.0 311.0,979.8 314.7,973.6 C318.4,967.4 322.9,962.1 327.0,957.5 C331.2,953.0 335.3,950.1 339.4,946.4 C343.5,942.7 347.6,939.6 351.7,935.3 C355.8,931.0 360.0,925.4 364.1,920.5 C368.2,915.6 372.3,910.0 376.4,905.7 C380.5,901.4 385.1,897.2 388.8,894.6 C392.5,891.9 395.3,890.2 398.6,889.6 C401.9,889.0 405.2,889.2 408.5,890.9 C411.8,892.5 415.5,896.0 418.4,899.5 C421.3,903.0 423.3,906.9 425.8,911.9 C428.3,916.8 430.7,922.6 433.2,929.1 C435.7,935.7 438.1,943.5 440.6,951.4 C443.1,959.2 445.6,967.4 448.0,976.0 C450.5,984.7 453.0,993.7 455.4,1003.2 C457.9,1012.7 460.4,1024.2 462.8,1032.8 C465.3,1041.5 467.4,1048.9 470.2,1055.1 C473.1,1061.2 477.2,1068.2 480.1,1069.9 C483.0,1071.5 484.7,1067.4 487.5,1064.9 C490.4,1062.5 493.7,1057.9 497.4,1055.1 C501.1,1052.2 506.5,1048.5 509.8,1047.7 C513.0,1046.8 514.7,1047.7 517.2,1050.1 C519.6,1052.6 521.7,1056.7 524.6,1062.5 C527.4,1068.2 531.6,1076.9 534.4,1084.7 C537.3,1092.5 539.6,1101.6 541.9,1109.4 C544.1,1117.2 546.4,1126.0 548.0,1131.6 C549.7,1137.2 550.3,1143.1 551.7,1142.7 C553.2,1142.3 554.6,1135.9 556.7,1129.1 C558.7,1122.3 561.6,1111.4 564.1,1102.0 C566.5,1092.5 568.8,1084.8 571.5,1072.3 C574.1,1059.9 577.6,1039.3 580.0,1027.1 C582.4,1014.9 583.7,1006.6 585.6,999.1 C587.5,991.7 588.9,988.4 591.2,982.3 C593.5,976.3 596.3,968.6 599.6,962.7 C602.9,956.9 606.6,951.5 610.8,947.3 C615.0,943.1 619.6,942.2 624.8,937.5 C629.9,932.9 636.0,925.2 641.6,919.4 C647.2,913.5 651.8,907.9 658.4,902.6 C664.9,897.2 674.2,892.8 680.8,887.2 C687.3,881.6 692.4,874.6 697.5,869.0 C702.7,863.4 707.3,857.6 711.5,853.6 C715.7,849.6 719.2,846.1 722.7,845.2 C726.2,844.3 729.3,845.4 732.5,848.0 C735.8,850.6 739.3,854.5 742.3,860.6 C745.4,866.6 747.9,875.3 750.7,884.4 C753.5,893.5 756.8,905.8 759.1,915.2 C761.5,924.5 762.4,930.6 764.7,940.3 C767.1,950.1 770.3,962.3 773.1,973.9 C775.9,985.6 778.9,1002.9 781.5,1010.3 C784.1,1017.8 786.2,1019.6 788.5,1018.7 C790.8,1017.8 792.9,1011.7 795.5,1004.7 C798.1,997.7 801.1,987.5 803.9,976.7 C806.7,966.0 810.0,951.1 812.3,940.3 C814.6,929.6 815.6,920.8 817.9,912.4 C820.2,904.0 823.0,895.5 826.3,890.0 C829.6,884.5 833.8,881.1 837.5,879.3 C841.2,877.6 844.5,877.8 848.7,879.3 C852.9,880.9 859.1,886.0 862.7,888.6 C866.2,891.2 866.6,890.1 870.0,895.0 C873.4,899.9 878.8,909.8 883.2,918.1 C887.6,926.3 892.0,935.1 896.3,944.4 C900.7,953.7 905.7,963.6 909.5,974.0 C913.4,984.5 916.1,995.4 919.4,1007.0 C922.7,1018.5 926.0,1031.1 929.3,1043.2 C932.6,1055.2 936.1,1067.3 939.1,1079.4 C942.2,1091.5 945.2,1106.6 947.4,1115.6 C949.6,1124.7 950.4,1134.3 952.3,1133.7 C954.2,1133.2 956.2,1121.9 958.9,1112.3 C961.6,1102.7 964.9,1087.6 968.8,1076.1 C972.6,1064.6 977.6,1052.0 982.0,1043.2 C986.3,1034.4 991.0,1027.8 995.1,1023.4 C999.2,1019.0 1002.8,1016.8 1006.6,1016.8 C1010.5,1016.8 1014.1,1020.4 1018.2,1023.4 C1022.3,1026.4 1028.1,1032.7 1031.3,1034.9 C1034.6,1037.1 1034.6,1039.1 1037.9,1036.6 C1041.2,1034.1 1046.7,1027.8 1051.1,1020.1 C1055.5,1012.4 1059.9,1001.5 1064.3,990.5 C1068.7,979.5 1072.5,966.3 1077.4,954.3 C1082.4,942.2 1089.0,927.1 1093.9,918.1 C1098.8,909.0 1102.7,903.2 1107.1,899.9 C1111.5,896.6 1115.9,896.4 1120.2,898.3 C1124.6,900.2 1129.6,903.8 1133.4,911.5 C1137.3,919.1 1140.0,931.2 1143.3,944.4 C1146.6,957.6 1150.4,976.3 1153.2,990.5 C1156.0,1004.7 1157.5,1016.1 1160.0,1029.6 C1162.5,1043.2 1165.7,1058.6 1167.9,1071.8 C1170.1,1084.9 1171.5,1097.2 1173.2,1108.6 C1174.8,1120.0 1176.4,1138.9 1177.9,1140.2 C1179.4,1141.6 1180.5,1127.9 1182.4,1116.5 C1184.2,1105.1 1186.6,1086.2 1189.0,1071.8 C1191.4,1057.3 1193.8,1042.4 1196.9,1029.6 C1199.9,1016.9 1203.9,1002.4 1207.4,995.4 C1210.9,988.4 1214.4,987.5 1217.9,987.5 C1221.5,987.5 1225.0,988.4 1228.5,995.4 C1232.0,1002.4 1235.9,1017.8 1239.0,1029.6 C1242.1,1041.5 1244.3,1054.6 1246.9,1066.5 C1249.5,1078.3 1252.8,1093.9 1254.8,1100.7 C1256.8,1107.5 1257.0,1107.8 1258.8,1107.3 C1260.5,1106.9 1262.5,1104.5 1265.3,1098.1 C1268.2,1091.7 1272.4,1079.2 1275.9,1069.1 C1279.4,1059.0 1282.5,1047.2 1286.4,1037.5 C1290.4,1027.9 1295.2,1018.6 1299.6,1011.2 C1304.0,1003.7 1308.8,997.6 1312.8,992.8 C1316.7,987.9 1320.0,984.6 1323.3,982.2 C1326.6,979.8 1329.4,978.0 1332.5,978.3 C1335.6,978.5 1338.4,978.9 1341.7,983.5 C1345.0,988.1 1348.7,995.6 1352.3,1005.9 C1355.8,1016.2 1359.7,1031.8 1362.8,1045.4 C1365.9,1059.0 1368.4,1074.0 1370.7,1087.6 C1373.0,1101.2 1374.5,1124.0 1376.5,1127.1 C1378.5,1130.1 1380.4,1118.7 1382.5,1106.0 C1384.7,1093.3 1386.7,1069.6 1389.1,1050.7 C1391.5,1031.8 1394.8,1007.7 1397.0,992.8 C1399.2,977.8 1400.3,972.6 1402.3,961.1 C1404.3,949.7 1406.2,936.6 1408.9,924.3 C1411.5,912.0 1414.8,896.4 1418.1,887.4 C1421.4,878.4 1425.1,873.1 1428.6,870.3 C1432.1,867.4 1435.4,866.8 1439.2,870.3 C1442.9,873.8 1447.4,881.4 1451.2,891.1 C1455.1,900.8 1458.7,912.9 1462.5,928.5 C1466.2,944.1 1470.0,964.1 1473.7,984.7 C1477.5,1005.3 1481.8,1033.4 1484.9,1052.1 C1488.1,1070.9 1490.4,1082.7 1492.4,1097.1 C1494.5,1111.4 1495.7,1135.2 1497.3,1138.3 C1498.9,1141.4 1500.1,1127.0 1501.8,1115.8 C1503.5,1104.6 1504.6,1092.7 1507.4,1070.9 C1510.2,1049.0 1514.9,1014.7 1518.7,984.7 C1522.4,954.8 1526.1,918.6 1529.9,891.1 C1533.6,863.6 1537.4,838.0 1541.1,819.9 C1544.9,801.8 1549.2,790.6 1552.4,782.5 C1555.5,774.4 1557.4,771.2 1559.9,771.2 C1562.3,771.2 1564.2,773.1 1567.3,782.5 C1570.5,791.8 1574.8,807.4 1578.6,827.4 C1582.3,847.4 1586.7,878.6 1589.8,902.3 C1592.9,926.0 1594.8,946.0 1597.3,969.7 C1599.8,993.5 1602.6,1020.3 1604.8,1044.6 C1607.0,1069.0 1609.2,1100.5 1610.4,1115.8 C1611.7,1131.1 1611.3,1136.4 1612.3,1136.4 C1613.2,1136.4 1614.2,1131.1 1616.0,1115.8 C1617.9,1100.5 1621.0,1069.0 1623.5,1044.6 C1626.0,1020.3 1628.3,994.7 1631.0,969.7 C1633.8,944.8 1638.5,907.3 1640.0,894.8" fill="none" stroke="url(#gcurve)" stroke-width="1.5"/>
  <line x1="1114.7" y1="770" x2="1114.7" y2="1146" stroke="#0000ff" stroke-width="3"/>
  <line x1="1559.5" y1="771" x2="1559.5" y2="1146" stroke="#ff0000" stroke-width="2"/>
  <line x1="0" y1="1146.3" x2="1640" y2="1146.3" stroke="#111" stroke-width="2"/>
  <g stroke="#111" stroke-width="2">
    <line x1="499" y1="1146" x2="499" y2="1163"/>
    <line x1="1093.2" y1="1146" x2="1093.2" y2="1163"/>
    <line x1="1439.7" y1="1146" x2="1439.7" y2="1163"/>
  </g>
  <polygon points="1502,1154 1506.7,1147.5 1511.4,1154" fill="#ffee00" stroke="#ff0000" stroke-width="1.6"/>
<g transform="translate(499.7 1184.3) rotate(-55)" fill="none" stroke="#000" stroke-width="1.7"><path d="M-6,7.6 V-5.5 L-11.4,-2.9 M0,-2.6 L4.7,7.0 M9.8,-2.5 L4.2,8.6 Q2.8,11 -0.2,10.9"/></g><g transform="translate(1093.7 1183.9) rotate(-55)" fill="none" stroke="#000" stroke-width="1.7"><path d="M-11.8,-3 C-11.2,-6.2 -5.5,-6.8 -3.8,-4.6 C-2.2,-2.4 -3.2,0 -5.2,1.8 L-11.8,7.6 H-2 M0,-2.6 L4.7,7.0 M9.8,-2.5 L4.2,8.6 Q2.8,11 -0.2,10.9"/></g><g transform="translate(1440.2 1184.2) rotate(-55)" fill="none" stroke="#000" stroke-width="1.7"><path d="M-11.5,-4.2 C-10.2,-6.6 -3.2,-6.6 -3.2,-3.0 C-3.2,-0.6 -5.4,0.6 -7.6,0.6 C-4.6,0.6 -2.2,2.0 -2.2,4.5 C-2.2,8.2 -9.6,9.0 -11.8,6.0 M0,-2.6 L4.7,7.0 M9.8,-2.5 L4.2,8.6 Q2.8,11 -0.2,10.9"/></g>
  <g transform="translate(468.70 972)"><path d="M1.5,5 V2.2 L4,1.3 H9.2 L11.8,3.4 V7.7 L10,10.2 L6.6,12.8 L5.55,14.5 V18" fill="none" stroke="#000" stroke-width="2.8"/><rect x="4.2" y="20.9" width="3" height="3" fill="#000"/></g>
<g transform="translate(485.77 972)"><path d="M1.5,5 V2.2 L4,1.3 H9.2 L11.8,3.4 V7.7 L10,10.2 L6.6,12.8 L5.55,14.5 V18" fill="none" stroke="#000" stroke-width="2.8"/><rect x="4.2" y="20.9" width="3" height="3" fill="#000"/></g>
<g transform="translate(502.84 972)"><path d="M1.5,5 V2.2 L4,1.3 H9.2 L11.8,3.4 V7.7 L10,10.2 L6.6,12.8 L5.55,14.5 V18" fill="none" stroke="#000" stroke-width="2.8"/><rect x="4.2" y="20.9" width="3" height="3" fill="#000"/></g>
</svg>
</body></html>
